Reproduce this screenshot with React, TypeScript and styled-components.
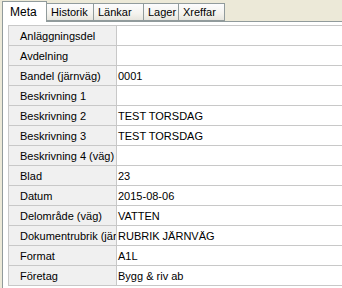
import React from "react";
import styled, { createGlobalStyle } from "styled-components";

const Global = createGlobalStyle`
  html, body { margin: 0; padding: 0; }
  body {
    width: 342px; height: 288px; overflow: hidden;
    background: #ece9d8;
    font-family: "Liberation Sans", Arial, sans-serif;
    font-size: 11px; color: #000;
  }
`;

const Page = styled.div`
  display: flex;
  flex-direction: column;
  padding-left: 2px;
  height: 288px;
`;

const TabStrip = styled.div`
  display: flex;
  align-items: flex-end;
  height: 22px;
  margin-bottom: -1px;
  position: relative;
  z-index: 1;
`;

const Tab = styled.div<{ $active?: boolean }>`
  box-sizing: border-box;
  height: ${(p) => (p.$active ? "21px" : "18px")};
  padding: 0 ${(p) => (p.$active ? "7px" : "4px")};
  display: flex;
  align-items: center;
  border: 1px solid #919b9c;
  border-bottom: ${(p) => (p.$active ? "none" : "1px solid #919b9c")};
  border-left: ${(p) => (p.$active ? "1px solid #919b9c" : "none")};
  background: ${(p) =>
    p.$active ? "#fff" : "linear-gradient(#fcfcfe, #f4f3ee 60%, #e6e5de)"};
  width: ${(p) => p.$w}px;
  font-size: ${(p) => (p.$active ? "12px" : "11px")};
  &:first-child { border-left: 1px solid #919b9c; }
  margin-bottom: ${(p) => (p.$active ? "0" : "1px")};
`;

const Panel = styled.div`
  flex: 1;
  background: #fff;
  border-left: 1px solid #919b9c;
  border-top: 1px solid #919b9c;
  padding: 3px 0 0 5px;
`;

const Grid = styled.div`
  display: grid;
  grid-template-columns: 108px 1fr;
  border-top: 1px solid #c8c8c8;
  border-left: 1px solid #c8c8c8;
`;

const Label = styled.div`
  background: #f0f0f0;
  height: 20px;
  box-sizing: border-box;
  padding-left: 11px;
  display: flex;
  align-items: center;
  border-bottom: 1px solid #c8c8c8;
  border-right: 1px solid #c8c8c8;
  white-space: nowrap;
  overflow: hidden;
`;

const Value = styled.div`
  background: #fff;
  height: 20px;
  box-sizing: border-box;
  padding-left: 1px;
  display: flex;
  align-items: center;
  border-bottom: 1px solid #c8c8c8;
  white-space: nowrap;
`;

const tabs: [string, number][] = [
  ["Meta", 45],
  ["Historik", 47],
  ["Länkar", 50],
  ["Lager", 35],
  ["Xreffar", 46],
];

const rows: [string, string][] = [
  ["Anläggningsdel", ""],
  ["Avdelning", ""],
  ["Bandel (järnväg)", "0001"],
  ["Beskrivning 1", ""],
  ["Beskrivning 2", "TEST TORSDAG"],
  ["Beskrivning 3", "TEST TORSDAG"],
  ["Beskrivning 4 (väg)", ""],
  ["Blad", "23"],
  ["Datum", "2015-08-06"],
  ["Delområde (väg)", "VATTEN"],
  ["Dokumentrubrik (järnväg)", "RUBRIK JÄRNVÄG"],
  ["Format", "A1L"],
  ["Företag", "Bygg & riv ab"],
];

export default function App() {
  return (
    <Page>
      <Global />
      <TabStrip>
        {tabs.map(([t, w], i) => (
          <Tab key={t} $active={i === 0} $w={w}>
            {t}
          </Tab>
        ))}
      </TabStrip>
      <Panel>
        <Grid>
          {rows.map(([l, v]) => (
            <React.Fragment key={l}>
              <Label>{l}</Label>
              <Value>{v}</Value>
            </React.Fragment>
          ))}
        </Grid>
      </Panel>
    </Page>
  );
}
